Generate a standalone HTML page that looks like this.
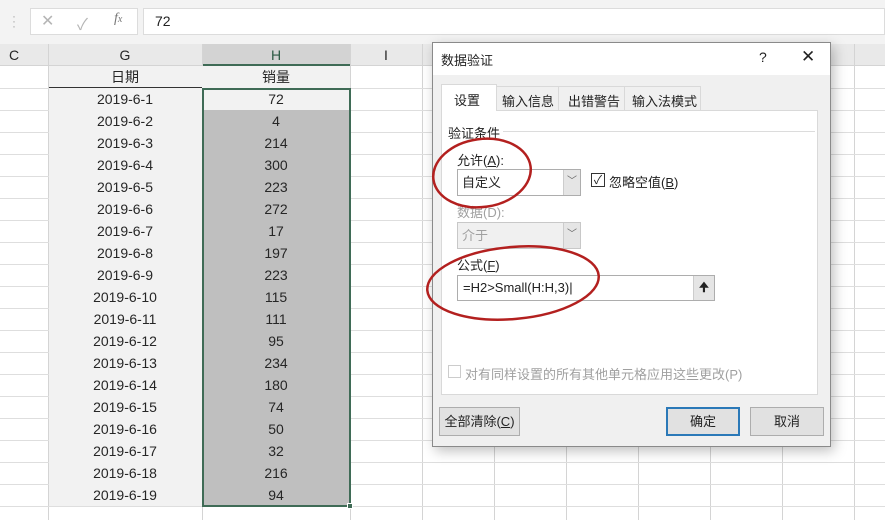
<!DOCTYPE html>
<html><head><meta charset="utf-8"><style>
*{margin:0;padding:0;box-sizing:border-box}
body{width:885px;height:520px;overflow:hidden;background:#fff;position:relative;font-family:"Liberation Sans","Noto Sans CJK SC",sans-serif;font-size:13px;color:#222}
.a{position:absolute}
.cell{position:absolute;height:22px;line-height:22px;text-align:center;font-size:14px;color:#262626}
.btn{position:absolute;height:29px;border:1px solid #adadad;background:#e1e1e1;text-align:center;line-height:27px;font-size:13px}
.lbl{position:absolute;font-size:13px}
</style></head><body>
<!-- formula bar -->
<div class="a" style="left:0;top:0;width:885px;height:44px;background:#f3f3f3"></div>
<div class="a" style="left:12px;top:14px;color:#aaa;font-size:12px;line-height:5px">·<br>·<br>·</div>
<div class="a" style="left:30px;top:8px;width:108px;height:27px;background:#fff;border:1px solid #dcdcdc"></div>
<div class="a" style="left:41px;top:11px;color:#b5b5b5;font-size:16px">✕</div>
<div class="a" style="left:77px;top:11px;color:#b5b5b5;font-size:16px">✓</div>
<div class="a" style="left:114px;top:11px;color:#777;font-size:14px;font-style:italic;font-family:'Liberation Serif',serif">f<span style="font-size:10px">x</span></div>
<div class="a" style="left:143px;top:8px;width:742px;height:27px;background:#fff;border:1px solid #dcdcdc;padding-left:11px;line-height:25px;font-size:14px">72</div>
<!-- column headers -->
<div class="a" style="left:0;top:44px;width:885px;height:22px;background:#e9e9e9;border-bottom:1px solid #d4d4d4"></div>
<div class="a" style="left:202px;top:44px;width:148px;height:22px;background:#d3d3d3;border-bottom:2px solid #3f6b56"></div>
<div class="cell" style="left:0;top:44px;width:28px">C</div>
<div class="cell" style="left:48px;top:44px;width:154px">G</div>
<div class="cell" style="left:202px;top:44px;width:148px;color:#2c5a44">H</div>
<div class="cell" style="left:350px;top:44px;width:72px">I</div>
<svg class="a" style="left:0;top:44px" width="885" height="476">
<g stroke="#d4d4d4" stroke-width="1">
<line x1="48.5" y1="0" x2="48.5" y2="476"/><line x1="202.5" y1="0" x2="202.5" y2="476"/><line x1="350.5" y1="0" x2="350.5" y2="476"/><line x1="422.5" y1="0" x2="422.5" y2="476"/><line x1="494.5" y1="0" x2="494.5" y2="476"/><line x1="566.5" y1="0" x2="566.5" y2="476"/><line x1="638.5" y1="0" x2="638.5" y2="476"/><line x1="710.5" y1="0" x2="710.5" y2="476"/><line x1="782.5" y1="0" x2="782.5" y2="476"/><line x1="854.5" y1="0" x2="854.5" y2="476"/>
</g>
<g stroke="#dedede">
<line x1="0" y1="44.5" x2="885" y2="44.5"/><line x1="0" y1="66.5" x2="885" y2="66.5"/><line x1="0" y1="88.5" x2="885" y2="88.5"/><line x1="0" y1="110.5" x2="885" y2="110.5"/><line x1="0" y1="132.5" x2="885" y2="132.5"/><line x1="0" y1="154.5" x2="885" y2="154.5"/><line x1="0" y1="176.5" x2="885" y2="176.5"/><line x1="0" y1="198.5" x2="885" y2="198.5"/><line x1="0" y1="220.5" x2="885" y2="220.5"/><line x1="0" y1="242.5" x2="885" y2="242.5"/><line x1="0" y1="264.5" x2="885" y2="264.5"/><line x1="0" y1="286.5" x2="885" y2="286.5"/><line x1="0" y1="308.5" x2="885" y2="308.5"/><line x1="0" y1="330.5" x2="885" y2="330.5"/><line x1="0" y1="352.5" x2="885" y2="352.5"/><line x1="0" y1="374.5" x2="885" y2="374.5"/><line x1="0" y1="396.5" x2="885" y2="396.5"/><line x1="0" y1="418.5" x2="885" y2="418.5"/><line x1="0" y1="440.5" x2="885" y2="440.5"/><line x1="0" y1="462.5" x2="885" y2="462.5"/>
</g></svg>
<!-- G/H data -->
<div class="a" style="left:49px;top:66px;width:301px;height:440px;background:#f2f2f2"></div>
<div class="a" style="left:49px;top:87px;width:153px;height:1px;background:#333"></div>
<div class="a" style="left:203px;top:110px;width:146px;height:396px;background:#bfbfbf"></div>
<div class="a" style="left:202px;top:88px;width:149px;height:419px;border:2px solid #3f6b56"></div>
<div class="a" style="left:347px;top:503px;width:6px;height:6px;background:#3f6b56;border:1px solid #fff"></div>
<div class="cell" style="left:48px;top:66px;width:154px">日期</div>
<div class="cell" style="left:202px;top:66px;width:148px">销量</div>
<div id="rows"></div>
<script>
var v=[72,4,214,300,223,272,17,197,223,115,111,95,234,180,74,50,32,216,94],h='';
for(var i=0;i<19;i++){var t=88+22*i;h+='<div class="cell" style="left:48px;top:'+t+'px;width:154px">2019-6-'+(i+1)+'</div><div class="cell" style="left:202px;top:'+t+'px;width:148px">'+v[i]+'</div>';}
document.getElementById('rows').innerHTML=h;
</script>
<!-- dialog -->
<div class="a" style="left:432px;top:42px;width:399px;height:405px;background:#f0f0f0;border:1px solid #8a8a8a;box-shadow:3px 4px 12px rgba(0,0,0,.25)"></div>
<div class="a" style="left:433px;top:43px;width:397px;height:32px;background:#fff"></div>
<div class="lbl" style="left:441px;top:50px">数据验证</div>
<div class="lbl" style="left:759px;top:49px;font-size:14px">?</div>
<div class="lbl" style="left:801px;top:47px;font-size:17px">✕</div>
<!-- tabs -->
<div class="a" style="left:441px;top:110px;width:377px;height:285px;background:#fff;border:1px solid #d9d9d9"></div>
<div class="a" style="left:441px;top:84px;width:56px;height:27px;background:#fff;border:1px solid #d9d9d9;border-bottom:none"></div>
<div class="a" style="left:497px;top:86px;width:62px;height:24px;border:1px solid #d9d9d9;border-bottom:none;border-left:none"></div>
<div class="a" style="left:559px;top:86px;width:66px;height:24px;border:1px solid #d9d9d9;border-bottom:none;border-left:none"></div>
<div class="a" style="left:625px;top:86px;width:76px;height:24px;border:1px solid #d9d9d9;border-bottom:none;border-left:none"></div>
<div class="lbl" style="left:454px;top:90px">设置</div>
<div class="lbl" style="left:502px;top:91px">输入信息</div>
<div class="lbl" style="left:568px;top:91px">出错警告</div>
<div class="lbl" style="left:632px;top:91px">输入法模式</div>
<div class="lbl" style="left:448px;top:123px">验证条件</div>
<div class="a" style="left:503px;top:131px;width:312px;height:1px;background:#dcdcdc"></div>
<div class="lbl" style="left:457px;top:150px">允许(<u>A</u>):</div>
<div class="a" style="left:457px;top:169px;width:124px;height:27px;border:1px solid #adadad;background:#fff;padding-left:4px;line-height:25px">自定义</div>
<div class="a" style="left:563px;top:170px;width:17px;height:25px;background:#e5e5e5;border-left:1px solid #ccc;text-align:center;line-height:24px;font-size:10px;color:#666">﹀</div>
<div class="a" style="left:591px;top:173px;width:14px;height:14px;border:1px solid #333;font-size:12px;line-height:12px;text-align:center">✓</div>
<div class="lbl" style="left:609px;top:172px">忽略空值(<u>B</u>)</div>
<div class="lbl" style="left:457px;top:202px;color:#a0a0a0">数据(D):</div>
<div class="a" style="left:457px;top:222px;width:124px;height:27px;border:1px solid #c8c8c8;background:#f0f0f0;padding-left:4px;line-height:25px;color:#a0a0a0">介于</div>
<div class="a" style="left:563px;top:223px;width:17px;height:25px;background:#e5e5e5;border-left:1px solid #ccc;text-align:center;line-height:24px;font-size:10px;color:#666">﹀</div>
<div class="lbl" style="left:457px;top:255px">公式(<u>F</u>)</div>
<div class="a" style="left:457px;top:275px;width:258px;height:26px;border:1px solid #adadad;background:#fff;padding-left:5px;line-height:24px;font-size:13px">=H2&gt;Small(H:H,3)|</div>
<div class="a" style="left:693px;top:276px;width:21px;height:24px;background:#e5e5e5;border-left:1px solid #ccc;text-align:center;line-height:22px;font-size:12px;font-weight:bold">🠉</div>
<div class="a" style="left:448px;top:365px;width:13px;height:13px;border:1px solid #ccc;background:#fff"></div>
<div class="lbl" style="left:465px;top:364px;color:#a0a0a0">对有同样设置的所有其他单元格应用这些更改(P)</div>
<div class="btn" style="left:439px;top:407px;width:81px">全部清除(<u>C</u>)</div>
<div class="btn" style="left:666px;top:407px;width:74px;border:2px solid #2b79b8;line-height:25px">确定</div>
<div class="btn" style="left:750px;top:407px;width:74px">取消</div>
<!-- red ellipses -->
<svg class="a" style="left:0;top:0" width="885" height="520">
<g fill="none" stroke="#b3201f" stroke-width="2.5">
<ellipse cx="482" cy="173" rx="49" ry="34" transform="rotate(-8 482 173)"/>
<ellipse cx="513" cy="283" rx="86" ry="36" transform="rotate(-5 513 283)"/>
</g></svg>
</body></html>
